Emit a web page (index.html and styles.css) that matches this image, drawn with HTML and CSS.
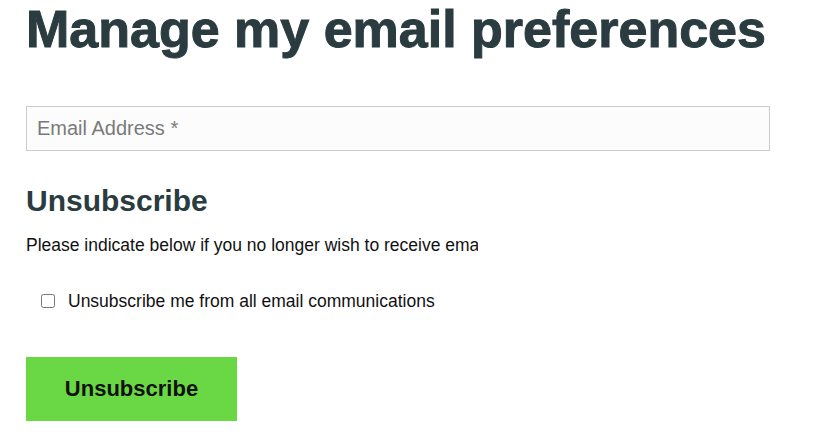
FILE: index.html
```html
<!DOCTYPE html>
<html>
<head>
<meta charset="utf-8">
<link rel="stylesheet" href="styles.css">
</head>
<body>
<main class="page">
  <h1 class="title">Manage my email preferences</h1>
  <form class="form">
    <input class="email" type="email" placeholder="Email Address *">
    <h2 class="subtitle">Unsubscribe</h2>
    <div class="note">Please indicate below if you no longer wish to receive email communications.</div>
    <label class="check">
      <input type="checkbox" class="box">
      <span>Unsubscribe me from all email communications</span>
    </label>
    <button type="button" class="btn">Unsubscribe</button>
  </form>
</main>
</body>
</html>
```

FILE: styles.css
```css
html, body {
  margin: 0;
  padding: 0;
  background: #ffffff;
}
.page {
  padding: 0 26px;
  font-family: "Liberation Sans", Arial, sans-serif;
}
.title {
  margin: 0;
  padding-top: 1px;
  font-size: 52px;
  line-height: 56px;
  font-weight: 700;
  color: #2a3c40;
  -webkit-text-stroke: 1px #2a3c40;
  white-space: nowrap;
}
.form {
  display: flex;
  flex-direction: column;
  align-items: flex-start;
}
.email {
  margin-top: 49px;
  box-sizing: border-box;
  width: 744px;
  height: 45px;
  border: 1px solid #cccccc;
  background: #fcfcfc;
  padding: 0 10px;
  font-family: "Liberation Sans", Arial, sans-serif;
  font-size: 20px;
  color: #333;
  outline: none;
}
.email::placeholder {
  color: #7a7a7a;
}
.subtitle {
  margin: 33px 0 0;
  font-size: 30px;
  line-height: 34px;
  font-weight: 700;
  color: #2a3c40;
}
.note {
  margin-top: 17px;
  width: 452px;
  overflow: hidden;
  white-space: nowrap;
  font-size: 17.5px;
  line-height: 20px;
  color: #111;
}
.check {
  margin-top: 36px;
  margin-left: 15px;
  display: flex;
  align-items: center;
  gap: 13px;
  font-size: 17.5px;
  line-height: 20px;
  color: #111;
}
.box {
  margin: 0;
  width: 14px;
  height: 14px;
}
.btn {
  margin-top: 46px;
  width: 211px;
  height: 64px;
  border: none;
  background: #6ad844;
  font-family: "Liberation Sans", Arial, sans-serif;
  font-size: 22px;
  font-weight: 700;
  color: #111;
  padding: 0;
}
```
